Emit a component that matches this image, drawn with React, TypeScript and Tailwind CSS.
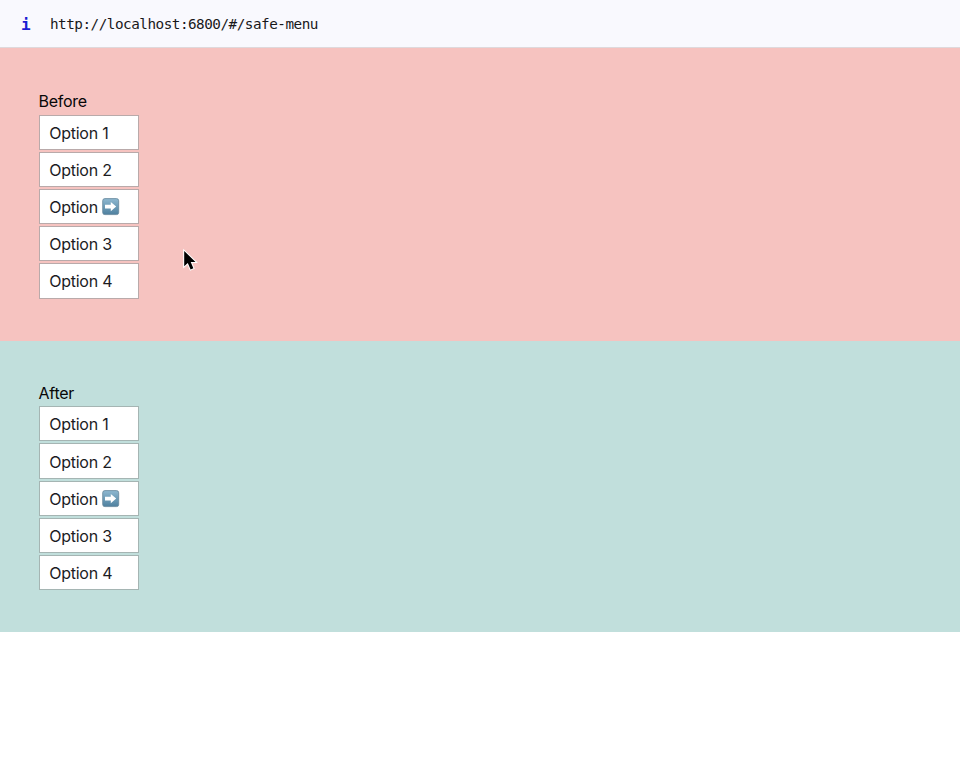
const ITEMS = ['1', '2', 'arrow', '3', '4'];

function ArrowBadge() {
  return (
    <svg className="ml-[4px] shrink-0" width="18" height="18" viewBox="0 0 18 18" role="img" aria-label="right arrow">
      <defs>
        <linearGradient id="tile" x1="0" y1="0" x2="0" y2="1">
          <stop offset="0" stopColor="#8fb8d0" />
          <stop offset="1" stopColor="#4e809f" />
        </linearGradient>
      </defs>
      <rect x="0.7" y="0.6" width="16" height="16" rx="2.2" fill="url(#tile)" stroke="#64869a" strokeWidth="0.8" />
      <path d="M3 6.8H8.8V3.9L14.2 8.6L8.8 13.3V10.4H3Z" fill="#fff" />
    </svg>
  );
}

function Menu({ title, panel, border }: { title: string; panel: string; border: string }) {
  return (
    <section className={`pl-[38.6px] ${panel}`}>
      <h2 className="h-[23.8px] text-[16px] leading-[20px] tracking-[-0.3px] text-[#080808]">{title}</h2>
      <ul className="flex w-[100px] flex-col gap-[2px]">
        {ITEMS.map((item) => (
          <li
            key={item}
            className={`flex h-[35.2px] items-center border bg-white pt-px pl-[9.6px] text-[16px] leading-[20px] tracking-[-0.25px] whitespace-pre text-[#1c1c1f] ${border}`}
          >
            {item === 'arrow' ? (
              <>
                Option
                <ArrowBadge />
              </>
            ) : (
              `Option ${item}`
            )}
          </li>
        ))}
      </ul>
    </section>
  );
}

export default function App() {
  return (
    <div className="relative h-[759px] w-[960px] overflow-hidden bg-white font-['Inter',sans-serif]">
      <header className="flex h-[48px] items-center border-b border-[#dfd9dc] bg-[#f9f9fe] pt-[2px] pl-[21px] font-['DejaVu_Sans_Mono',monospace] text-[14.3px]">
        <span className="w-[29px] text-[16px] font-bold text-[#1c1cd2]">i</span>
        <span className="tracking-[-0.49px] text-[#18181a]">http://localhost:6800/#/safe-menu</span>
      </header>
      <Menu title="Before" panel="h-[293px] bg-[#f6c3c0] pt-[42.8px]" border="border-[#b9aaaa]" />
      <Menu title="After" panel="h-[291px] bg-[#c1dfdc] pt-[41.5px]" border="border-[#a5b5b3]" />
      <svg className="absolute top-[248px] left-[181px]" width="18" height="26" viewBox="0 0 18 26">
        <path
          d="M3.2 3V18.2L6.8 14.9L9.6 21.4L12.4 20.2L9.7 13.9H14.5Z"
          fill="#000"
          stroke="#fff"
          strokeWidth="2"
          paintOrder="stroke"
        />
      </svg>
    </div>
  );
}
